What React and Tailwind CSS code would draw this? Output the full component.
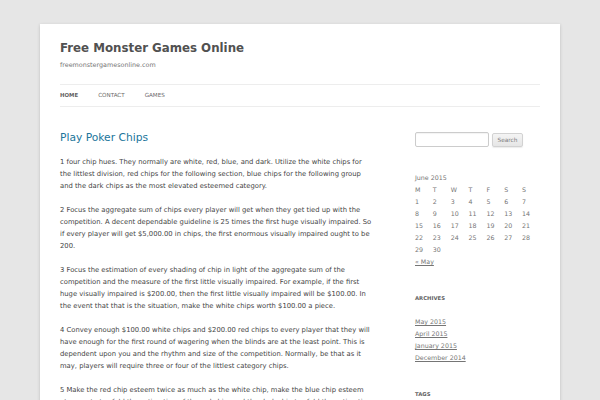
import React from "react";

const paras = [
  "1 four chip hues. They normally are white, red, blue, and dark. Utilize the white chips for the littlest division, red chips for the following section, blue chips for the following group and the dark chips as the most elevated esteemed category.",
  "2 Focus the aggregate sum of chips every player will get when they get tied up with the competition. A decent dependable guideline is 25 times the first huge visually impaired. So if every player will get $5,000.00 in chips, the first enormous visually impaired ought to be 200.",
  "3 Focus the estimation of every shading of chip in light of the aggregate sum of the competition and the measure of the first little visually impaired. For example, if the first huge visually impaired is $200.00, then the first little visually impaired will be $100.00. In the event that that is the situation, make the white chips worth $100.00 a piece.",
  "4 Convey enough $100.00 white chips and $200.00 red chips to every player that they will have enough for the first round of wagering when the blinds are at the least point. This is dependent upon you and the rhythm and size of the competition. Normally, be that as it may, players will require three or four of the littlest category chips.",
  "5 Make the red chip esteem twice as much as the white chip, make the blue chip esteem at any rate twofold the estimation of the red chip, and the dark chip twofold the estimation of the blue chip.",
];

const weeks = [
  ["1", "2", "3", "4", "5", "6", "7"],
  ["8", "9", "10", "11", "12", "13", "14"],
  ["15", "16", "17", "18", "19", "20", "21"],
  ["22", "23", "24", "25", "26", "27", "28"],
  ["29", "30", "", "", "", "", ""],
];

export default function App() {
  return (
    <div className="min-h-[400px] h-[400px] overflow-hidden bg-[#e6e6e6] pt-[24px] font-['DejaVu_Sans',sans-serif]">
      <div className="mx-auto w-[520px] min-h-[400px] bg-white px-[20px] shadow-[0_1px_3px_rgba(100,100,100,0.3)]">
        <header className="pt-[17px]">
          <h1 className="text-[11.8px] leading-[15px] font-bold text-[#515151]">
            Free Monster Games Online
          </h1>
          <p className="mt-[3px] text-[6.4px] leading-[12px] text-[#757575]">
            freemonstergamesonline.com
          </p>
          <nav className="mt-[13px] border-y border-[#ededed] h-[23px] flex items-center gap-[20px] text-[5.6px] leading-[21px] uppercase">
            <span className="font-bold text-[#636363] text-[5.4px]">Home</span>
            <span className="text-[#6a6a6a]">Contact</span>
            <span className="text-[#6a6a6a]">Games</span>
          </nav>
        </header>
        <div className="mt-[25px] flex justify-between">
          <main className="w-[312.5px]">
            <h2 className="text-[10.7px] leading-[12px] text-[#21759b] mb-[12px]">
              Play Poker Chips
            </h2>
            {paras.map((p, i) => (
              <p key={i} className="text-[6.8px] leading-[12px] text-[#444] mb-[12px]">
                {p}
              </p>
            ))}
          </main>
          <aside className="w-[125px] text-[6.3px] leading-[12px] text-[#757575]">
            <div className="flex items-center gap-[3px] h-[15px]">
              <div className="w-[74px] h-[15px] rounded-[2px] border border-[#ccc] shadow-[inset_0_1px_1px_rgba(0,0,0,0.05)] bg-white" />
              <div className="w-[31px] h-[14px] rounded-[2px] border border-[#d2d2d2] bg-gradient-to-b from-[#f4f4f4] to-[#e6e6e6] shadow-[0_1px_1px_rgba(64,64,64,0.1)] flex items-center justify-center text-[5.8px] text-[#7c7c7c]">
                Search
              </div>
            </div>
            <div className="mt-[25px]">
              <div>June 2015</div>
              <table className="w-full border-collapse">
                <thead>
                  <tr>
                    {["M", "T", "W", "T", "F", "S", "S"].map((d, i) => (
                      <th key={i} className="text-left font-normal p-0 w-[17.86px]">{d}</th>
                    ))}
                  </tr>
                </thead>
                <tbody>
                  {weeks.map((w, i) => (
                    <tr key={i}>
                      {w.map((d, j) => (
                        <td key={j} className="p-0 h-[12px]">{d}</td>
                      ))}
                    </tr>
                  ))}
                </tbody>
              </table>
              <div className="underline">« May</div>
            </div>
            <div className="mt-[24px]">
              <h3 className="text-[5.3px] leading-[12px] font-bold uppercase text-[#636363] mb-[12px]">Archives</h3>
              <ul>
                <li className="underline">May 2015</li>
                <li className="underline">April 2015</li>
                <li className="underline">January 2015</li>
                <li className="underline">December 2014</li>
              </ul>
            </div>
            <div className="mt-[24px]">
              <h3 className="text-[5.3px] leading-[12px] font-bold uppercase text-[#636363] mb-[12px]">Tags</h3>
            </div>
          </aside>
        </div>
      </div>
    </div>
  );
}
